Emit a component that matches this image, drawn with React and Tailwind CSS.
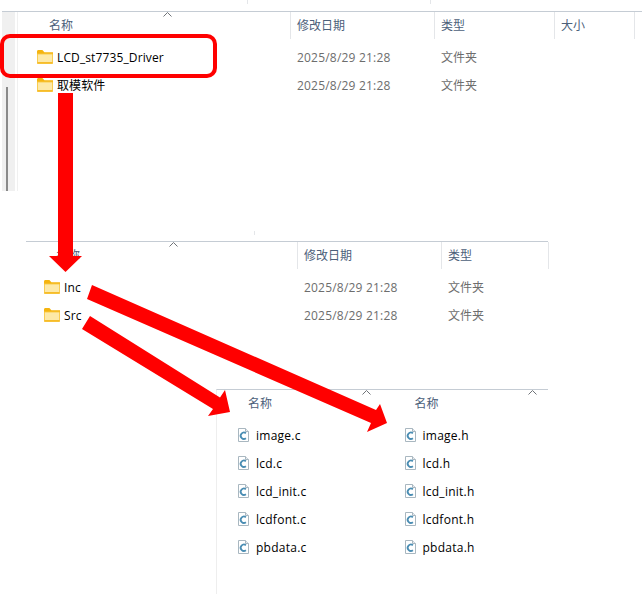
const folders1 = [
  { name: "LCD_st7735_Driver", date: "2025/8/29 21:28", type: "文件夹" },
  { name: "取模软件", date: "2025/8/29 21:28", type: "文件夹" },
];
const folders2 = [
  { name: "Inc", date: "2025/8/29 21:28", type: "文件夹" },
  { name: "Src", date: "2025/8/29 21:28", type: "文件夹" },
];
const stems = ["image", "lcd", "lcd_init", "lcdfont", "pbdata"];

function FolderIcon() {
  return (
    <svg width="16" height="14" viewBox="0 0 16 14" className="shrink-0">
      <path d="M0 1.5C0 .7.6 0 1.4 0h4l2 2.2H16V5H0z" fill="#f5b40f" />
      <path d="M0 3.6h15c.6 0 1 .4 1 1V13c0 .6-.4 1-1 1H1c-.6 0-1-.4-1-1z" fill="#f8c53c" />
      <path d="M.8 4.4h14.4V12H.8z" fill="#fde9a8" />
      <path d="M.8 12h14.4v1.2H.8z" fill="#f6bc2a" />
    </svg>
  );
}

function CFileIcon() {
  return (
    <svg width="11" height="14" viewBox="0 0 11 14" className="shrink-0">
      <path d="M.5.5h7l3 3v10H.5z" fill="#fff" stroke="#a9b7c0" />
      <path d="M7.5.5v3h3" fill="#e8ecef" stroke="#a9b7c0" />
      <path d="M7.9 5.2A3.2 3.2 0 1 0 7.9 10.2" fill="none" stroke="#4a8db3" strokeWidth="1.8" />
    </svg>
  );
}

function Chevron() {
  return (
    <svg width="9" height="5" viewBox="0 0 9 5" className="absolute top-0">
      <path d="M.5 4.5l4-4 4 4" fill="none" stroke="#6f7378" />
    </svg>
  );
}

function Separator() {
  return <div className="absolute top-0 right-0 h-[27px] w-px bg-[#e4e6e9]" />;
}

function HeaderCell({ label, width, pad, sortAt }) {
  return (
    <div className="relative h-[27px] flex items-center shrink-0" style={{ width, paddingLeft: pad }}>
      <span className="text-[#4c607a]">{label}</span>
      {sortAt ? (
        <span className="absolute top-0" style={{ left: sortAt }}>
          <Chevron />
        </span>
      ) : null}
      <Separator />
    </div>
  );
}

function FolderTable({ nameWidth, headPad, iconPad, sortAt, rows, withSize }) {
  return (
    <div className="flex-1">
      <div className="flex">
        <HeaderCell label="名称" width={nameWidth} pad={headPad} sortAt={sortAt} />
        <HeaderCell label="修改日期" width={144} pad={6} />
        <HeaderCell label="类型" width={withSize ? 120 : 107} pad={6} />
        {withSize ? <HeaderCell label="大小" width={80} pad={6} /> : null}
      </div>
      <div className="mt-[4px]">
        {rows.map((row) => (
          <div key={row.name} className="flex h-[28px] items-center">
            <div className="flex items-center gap-[4px] shrink-0" style={{ width: nameWidth, paddingLeft: iconPad }}>
              <FolderIcon />
              <span className="pt-[2px] text-black tracking-[0.12px]">{row.name}</span>
            </div>
            <div className="w-[144px] pt-[2px] pl-[6px] text-[#6d6d6d] tracking-[0.2px]">{row.date}</div>
            <div className="pt-[2px] pl-[6px] text-[#6d6d6d]">{row.type}</div>
          </div>
        ))}
      </div>
    </div>
  );
}

function FileColumn({ ext, width, sortAt }) {
  return (
    <div style={{ width }}>
      <div className="relative h-[27px] flex items-center pl-[31px] text-[#4c607a]">
        名称
        <span className="absolute top-0" style={{ left: sortAt }}>
          <Chevron />
        </span>
      </div>
      <div className="mt-[4px]">
        {stems.map((stem) => (
          <div key={stem} className="flex h-[28px] items-center gap-[7px] pl-[21px] text-black">
            <CFileIcon />
            <span className="pt-[2px] tracking-[0.25px]">{stem + ext}</span>
          </div>
        ))}
      </div>
    </div>
  );
}

export default function App() {
  return (
    <div
      className="relative w-[642px] h-[594px] overflow-hidden bg-white text-[12px] leading-none"
      style={{ fontFamily: '"Open Sans", "Noto Sans CJK SC", sans-serif' }}
    >
      <div className="absolute left-[247px] top-0 h-[4px] w-px bg-[#e4e6e9]" />
      <div className="absolute left-[430px] top-0 h-[4px] w-px bg-[#e4e6e9]" />
      <div className="absolute left-[254px] top-[231px] h-[4px] w-px bg-[#e4e6e9]" />

      {/* first window */}
      <div className="absolute left-[2px] top-[11px] w-[640px] border-t border-[#c5ccd4] flex">
        <div className="w-[13px] h-[179px] bg-[#f0f0f0] relative">
          <div className="absolute left-[4px] top-[75px] h-[104px] w-[2px] bg-[#8a8a8a]" />
        </div>
        <div className="w-px h-[179px] ml-[2px] bg-[#f0f0f0]" />
        <FolderTable nameWidth={273} headPad={31} iconPad={19} sortAt={145} rows={folders1} withSize />
      </div>

      {/* second window */}
      <div className="absolute left-[26px] top-[241px] w-[522px] border-t border-[#c5ccd4]">
        <FolderTable nameWidth={272} headPad={30} iconPad={18} sortAt={143} rows={folders2} />
      </div>

      {/* third window */}
      <div className="absolute left-[216px] top-[389px] w-[332px] h-[205px] border-t border-l border-t-[#c5ccd4] border-l-[#eeeeee] flex">
        <FileColumn ext=".c" width={167} sortAt={145} />
        <FileColumn ext=".h" width={165} sortAt={144} />
      </div>

      {/* annotations */}
      <div className="absolute left-0 top-[34px] w-[217px] h-[44px] rounded-[10px] border-[4px] border-[#ff0000]" />
      <svg width="642" height="594" viewBox="0 0 642 594" className="absolute left-0 top-0">
        <polygon points="58,93 73,93 73,256 82,256 65.5,272 49,256 58,256" fill="#ff0000" />
        <polygon points="92,285 376,410 380,404 387,423 367,432 371,423 87,299" fill="#ff0000" />
        <polygon points="90,316 220,397.5 225,390 230,412 208,416 213,409 82,329" fill="#ff0000" />
      </svg>
    </div>
  );
}
